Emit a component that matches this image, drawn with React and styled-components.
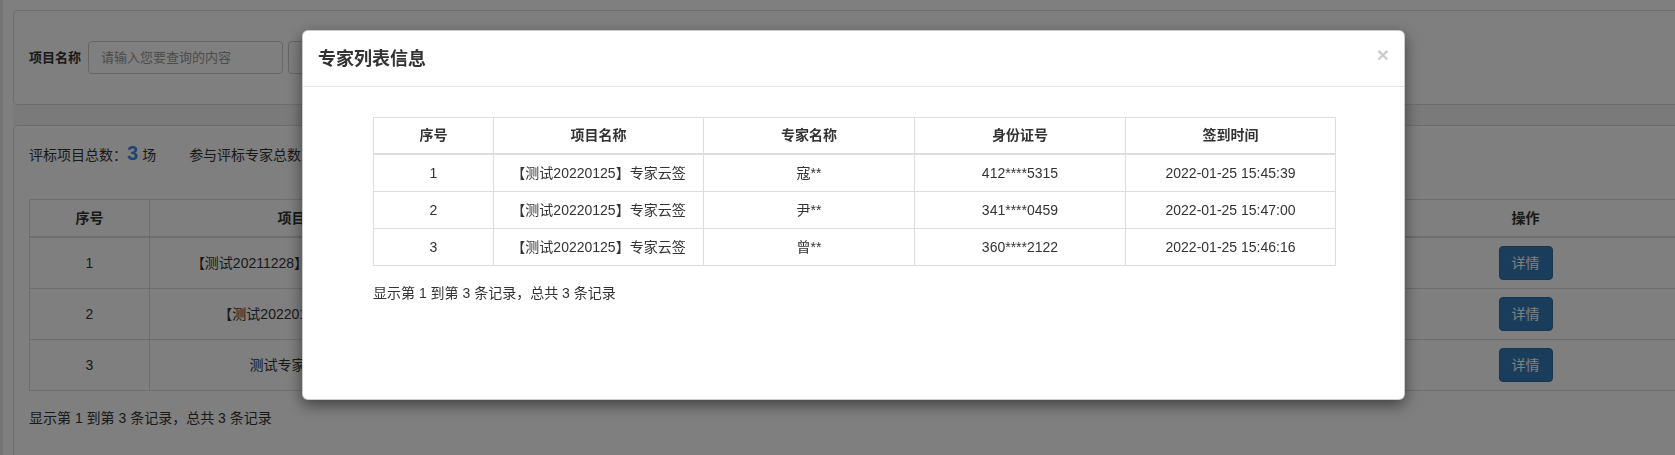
import styled, { createGlobalStyle } from "styled-components";

const projects = [
  { no: 1, name: "【测试20211228】专家抽取签到测试", time: "2021-12-28 09:30:00", count: 5 },
  { no: 2, name: "【测试20220125】专家云签", time: "2022-01-25 15:40:00", count: 3 },
  { no: 3, name: "测试专家云签项目", time: "2022-01-20 10:00:00", count: 4 },
];

const experts = [
  { no: 1, project: "【测试20220125】专家云签", name: "寇**", id: "412****5315", time: "2022-01-25 15:45:39" },
  { no: 2, project: "【测试20220125】专家云签", name: "尹**", id: "341****0459", time: "2022-01-25 15:47:00" },
  { no: 3, project: "【测试20220125】专家云签", name: "曾**", id: "360****2122", time: "2022-01-25 15:46:16" },
];

const App = () => {
  return (
    <>
      <GlobalStyle />
      <Page>
        <SearchPanel>
          <Label>项目名称</Label>
          <SearchInput placeholder="请输入您要查询的内容" />
          <SearchButton>查询</SearchButton>
        </SearchPanel>
        <Band />
        <ListPanel>
          <Stats>
            <span>评标项目总数：</span>
            <BigNum>3</BigNum>
            <span>场</span>
            <StatGap />
            <span>参与评标专家总数：</span>
            <BigNum>12</BigNum>
            <span>人</span>
          </Stats>
          <PageTable>
            <colgroup>
              <col style={{ width: 120 }} />
              <col style={{ width: 312 }} />
              <col style={{ width: 450 }} />
              <col style={{ width: 449 }} />
              <col style={{ width: 330 }} />
            </colgroup>
            <thead>
              <tr>
                <PageTh>序号</PageTh>
                <PageTh>项目名称</PageTh>
                <PageTh>开标时间</PageTh>
                <PageTh>签到专家人数</PageTh>
                <PageTh>操作</PageTh>
              </tr>
            </thead>
            <tbody>
              {projects.map((p) => (
                <tr key={p.no}>
                  <PageTd>{p.no}</PageTd>
                  <PageTd>{p.name}</PageTd>
                  <PageTd>{p.time}</PageTd>
                  <PageTd>{p.count}</PageTd>
                  <PageTd>
                    <DetailButton>详情</DetailButton>
                  </PageTd>
                </tr>
              ))}
            </tbody>
          </PageTable>
          <Pager>显示第 1 到第 3 条记录，总共 3 条记录</Pager>
        </ListPanel>
      </Page>
      <Backdrop />
      <Modal>
        <ModalHeader>
          <ModalTitle>专家列表信息</ModalTitle>
          <CloseButton>×</CloseButton>
        </ModalHeader>
        <ModalBody>
          <ExpertTable>
            <colgroup>
              <col style={{ width: 120 }} />
              <col style={{ width: 210 }} />
              <col style={{ width: 211 }} />
              <col style={{ width: 211 }} />
              <col style={{ width: 210 }} />
            </colgroup>
            <thead>
              <tr>
                <ExpertTh>序号</ExpertTh>
                <ExpertTh>项目名称</ExpertTh>
                <ExpertTh>专家名称</ExpertTh>
                <ExpertTh>身份证号</ExpertTh>
                <ExpertTh>签到时间</ExpertTh>
              </tr>
            </thead>
            <tbody>
              {experts.map((e) => (
                <tr key={e.no}>
                  <ExpertTd>{e.no}</ExpertTd>
                  <ExpertTd>{e.project}</ExpertTd>
                  <ExpertTd>{e.name}</ExpertTd>
                  <ExpertTd>{e.id}</ExpertTd>
                  <ExpertTd>{e.time}</ExpertTd>
                </tr>
              ))}
            </tbody>
          </ExpertTable>
          <Pager>显示第 1 到第 3 条记录，总共 3 条记录</Pager>
        </ModalBody>
      </Modal>
    </>
  );
};
export default App;

const GlobalStyle = createGlobalStyle`
  html, body {
    margin: 0;
    padding: 0;
    overflow: hidden;
    background: #e8e8e8;
  }
  body {
    font-family: "Liberation Sans", "Noto Sans CJK SC", sans-serif;
    font-size: 14px;
    line-height: 20px;
    color: #333;
  }
  * {
    box-sizing: border-box;
  }
`;

const Page = styled.div`
  margin-left: 3px;
  width: 1720px;
  height: 455px;
  overflow: hidden;
  background: #fff;
  padding: 10px 0 0 10px;
`;

const SearchPanel = styled.div`
  display: flex;
  align-items: center;
  height: 95px;
  padding: 0 15px;
  border: 1px solid #ddd;
  border-radius: 4px;
`;

const Label = styled.label`
  font-size: 13px;
  font-weight: bold;
  margin-right: 7px;
`;

const SearchInput = styled.input`
  width: 195px;
  height: 33px;
  padding: 6px 12px;
  border: 1px solid #ccc;
  border-radius: 4px;
  font-family: inherit;
  font-size: 13px;
  color: #555;
  &::placeholder {
    color: #999;
  }
`;

const SearchButton = styled.button`
  margin-left: 5px;
  height: 33px;
  padding: 0 16px;
  background: #fff;
  border: 1px solid #ccc;
  border-radius: 4px;
  font-family: inherit;
  font-size: 13px;
  color: #333;
`;

const Band = styled.div`
  height: 20px;
  background: #f4f4f4;
`;

const ListPanel = styled.div`
  height: 400px;
  padding: 0 15px;
  border: 1px solid #ddd;
  border-radius: 4px 4px 0 0;
`;

const Stats = styled.div`
  display: flex;
  align-items: baseline;
  height: 24px;
  margin-top: 17px;
  font-size: 14px;
`;

const BigNum = styled.strong`
  color: #3b8ee0;
  font-size: 20px;
  margin: 0 4px 0 0;
`;

const StatGap = styled.i`
  display: inline-block;
  width: 33px;
`;

const PageTable = styled.table`
  margin-top: 32px;
  width: 1661px;
  table-layout: fixed;
  border-collapse: collapse;
`;

const PageTh = styled.th`
  height: 37px;
  padding: 8px;
  border: 1px solid #ddd;
  border-bottom-width: 2px;
  text-align: center;
  font-weight: bold;
  white-space: nowrap;
`;

const PageTd = styled.td`
  height: 51px;
  padding: 8px;
  border: 1px solid #ddd;
  text-align: center;
  white-space: nowrap;
  vertical-align: middle;
`;

const DetailButton = styled.button`
  height: 34px;
  padding: 6px 12px;
  background: #337ab7;
  border: 1px solid #2e6da4;
  border-radius: 4px;
  color: #fff;
  font-family: inherit;
  font-size: 14px;
  line-height: 20px;
`;

const Pager = styled.div`
  margin-top: 17px;
  font-size: 14px;
  line-height: 20px;
`;

const Backdrop = styled.div`
  position: fixed;
  inset: 0;
  background: rgba(0, 0, 0, 0.5);
`;

const Modal = styled.div`
  position: fixed;
  top: 30px;
  left: 302px;
  width: 1103px;
  height: 370px;
  background: #fff;
  border: 1px solid rgba(0, 0, 0, 0.2);
  border-radius: 6px;
  box-shadow: 0 5px 15px rgba(0, 0, 0, 0.5);
  overflow: hidden;
`;

const ModalHeader = styled.div`
  display: flex;
  align-items: center;
  justify-content: space-between;
  height: 56px;
  padding: 0 15px;
  border-bottom: 1px solid #e5e5e5;
`;

const ModalTitle = styled.h4`
  margin: 0;
  font-size: 18px;
  font-weight: bold;
  line-height: 26px;
  color: #333;
`;

const CloseButton = styled.button`
  margin-top: -8px;
  padding: 0;
  background: none;
  border: 0;
  font-family: "Liberation Sans", sans-serif;
  font-size: 21px;
  font-weight: bold;
  line-height: 1;
  color: #000;
  opacity: 0.2;
`;

const ModalBody = styled.div`
  padding: 30px 70px 0;
`;

const ExpertTable = styled.table`
  width: 962px;
  table-layout: fixed;
  border-collapse: collapse;
`;

const ExpertTh = styled.th`
  height: 36px;
  padding: 7px 8px;
  border: 1px solid #ddd;
  border-bottom-width: 2px;
  text-align: center;
  font-weight: bold;
`;

const ExpertTd = styled.td`
  height: 37px;
  padding: 8px;
  border: 1px solid #ddd;
  text-align: center;
  white-space: nowrap;
`;
